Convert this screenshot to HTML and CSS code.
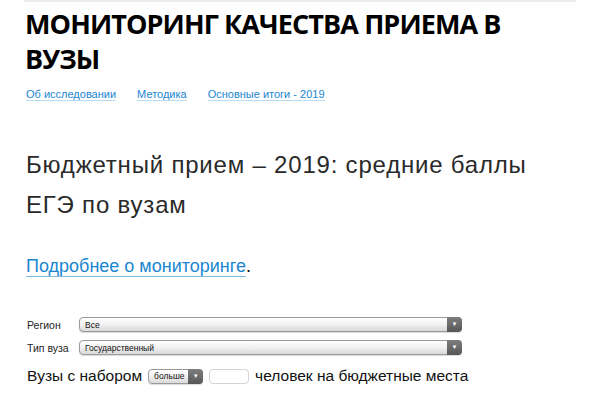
FILE: index.html
```html
<!DOCTYPE html>
<html lang="ru">
<head>
<meta http-equiv="Content-Type" content="text/html; charset=UTF-8">
<meta name="viewport" content="width=device-width">
<title>Мониторинг качества приема в вузы</title>
<link rel="stylesheet" href="styles.css">
</head>
<body>
<div class="page">
  <h1 class="title">Мониторинг качества приема в вузы</h1>

  <ul class="nav">
    <li><a href="#">Об исследовании</a></li>
    <li><a href="#">Методика</a></li>
    <li><a href="#">Основные итоги - 2019</a></li>
  </ul>

  <h2 class="subtitle">Бюджетный прием – 2019: средние баллы ЕГЭ по вузам</h2>

  <p class="more"><a href="#">Подробнее о мониторинге</a>.</p>

  <form class="filters">
    <label class="filters-label" for="region">Регион</label>
    <span class="select">
      <select id="region">
        <option>Все</option>
      </select>
    </span>

    <label class="filters-label" for="type">Тип вуза</label>
    <span class="select">
      <select id="type">
        <option>Государственный</option>
      </select>
    </span>
  </form>

  <div class="quota">
    Вузы с набором
    <span class="select select-small">
      <select>
        <option>больше</option>
        <option>меньше</option>
      </select>
    </span>
    <input class="quota-input" type="text">
    человек на бюджетные места
  </div>
</div>
</body>
</html>
```

FILE: styles.css
```css
body{margin:0;background:#fff;color:#111;font-family:"Liberation Sans",Arial,sans-serif}
.page{width:552px;margin:0 0 0 24px;padding-top:4px;border-top:2px solid #ececec}

.title{margin:0 0 0 1px;font-family:"Open Sans",sans-serif;font-weight:700;font-size:27px;line-height:35px;text-transform:uppercase;color:#000;letter-spacing:-.9px}

.nav{display:flex;gap:21px;list-style:none;margin:12px 0 0 2px;padding:0;font-size:11px}
.nav a{color:#1a86d0;text-decoration:none;border-bottom:1px solid #b8dcf3}

.subtitle{width:520px;margin:45px 0 0 2px;font-weight:400;font-size:24px;line-height:40px;letter-spacing:.8px;color:#2a2a2a}

.more{margin:31px 0 0 2px;font-size:18px;color:#000}
.more a{color:#1a86d0;text-decoration:none;border-bottom:1px solid #7fbde6}

.filters{display:grid;grid-template-columns:52px 383px;row-gap:8px;align-items:center;margin:40px 0 0 3px}
.filters-label{font-size:10.5px;color:#222}

.select{position:relative;display:block;height:15px}
.select select{appearance:none;-webkit-appearance:none;display:block;width:100%;height:15px;margin:0;padding:0 0 0 5px;border:1px solid #9a9a9a;border-radius:4px;background:linear-gradient(#fff,#f1f1f1 50%,#d9d9d9);font-family:"Liberation Sans",Arial,sans-serif;font-size:8.5px;color:#111;box-shadow:0 1px 1px rgba(0,0,0,.15)}
/* dark arrow button drawn over the right end of the box */
.select::after{content:"▼";position:absolute;top:0;right:0;width:15px;height:15px;border-radius:0 4px 4px 0;background:linear-gradient(#7e7e7e,#575757);color:#fff;font-size:6px;line-height:15px;text-align:center;pointer-events:none}

.quota{display:flex;align-items:center;gap:6px;margin:12px 0 0 3px;font-size:15.5px;color:#111}
.select-small{display:inline-block;width:55px}
.quota-input{width:40px;height:15px;margin:0;padding:0;border:1px solid #d4d4d4;border-radius:4px;box-sizing:border-box}
```
